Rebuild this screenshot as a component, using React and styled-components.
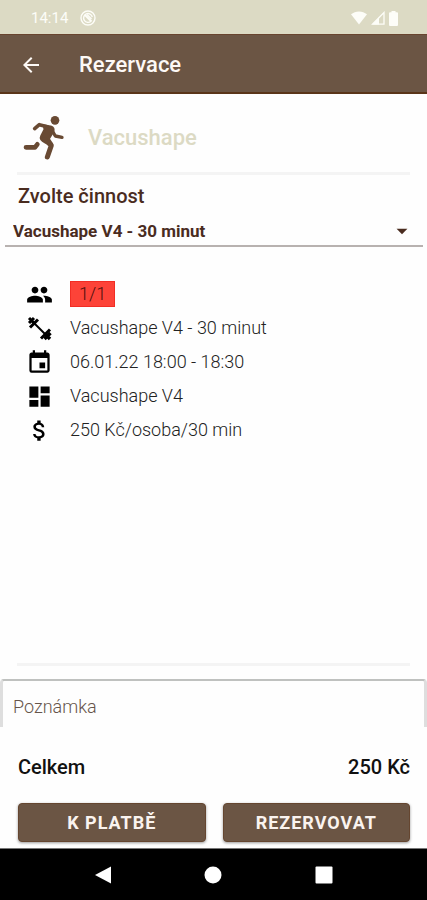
import React from "react";
import styled, { createGlobalStyle } from "styled-components";
import {
  MdArrowBack,
  MdArrowDropDown,
  MdPeople,
  MdEvent,
  MdDashboard,
  MdAttachMoney,
} from "react-icons/md";

const brown = "#6b5544";
const darkBrown = "#4a2c1f";
const sand = "#dcdac4";

const GlobalStyle = createGlobalStyle`
  *, *::before, *::after { box-sizing: border-box; }
  body {
    margin: 0;
    background: #fefefe;
    font-family: Roboto, "Liberation Sans", sans-serif;
  }
  button, input, select { font: inherit; }
`;

const Screen = styled.div`
  display: flex;
  flex-direction: column;
  min-height: 100vh;
  background: #fefefe;
`;

const StatusBar = styled.div`
  display: flex;
  align-items: center;
  justify-content: space-between;
  height: 34px;
  padding: 2px 29px 0 31px;
  background: ${sand};
  color: #fdfdf8;
`;

const StatusGroup = styled.div`
  display: flex;
  align-items: center;
  gap: ${(p) => p.$gap}px;
  font-size: 15px;
  line-height: 20px;
`;

const Toolbar = styled.header`
  display: flex;
  align-items: center;
  gap: 36px;
  height: 60px;
  padding: 2px 19px 0;
  background: ${brown};
  border-top: 1px solid #68442f;
  border-bottom: 2px solid #5a351a;
  color: #fdf9f6;
`;

const BackButton = styled.button`
  display: flex;
  padding: 0;
  border: 0;
  background: none;
  color: inherit;
  cursor: pointer;
`;

const Title = styled.h1`
  margin: 0;
  font-size: 22px;
  line-height: 28px;
  font-weight: 500;
`;

const Content = styled.main`
  display: flex;
  flex: 1;
  flex-direction: column;
`;

const ServiceHeader = styled.div`
  display: flex;
  align-items: center;
  gap: 20px;
  height: 78px;
  padding: 10px 22px 0;
  color: #694a33;
`;

const ServiceName = styled.h2`
  margin: 0;
  color: ${sand};
  font-size: 22px;
  line-height: 28px;
  font-weight: 500;
`;

const Divider = styled.hr`
  width: auto;
  height: 3px;
  margin: 0 17px;
  border: 0;
  background: #f4f4f4;
`;

const ActivityLabel = styled.label`
  padding: 9px 18px 0;
  color: ${darkBrown};
  font-size: 20px;
  line-height: 24px;
  font-weight: 500;
`;

const SelectBox = styled.div`
  position: relative;
  margin: 9px 4px 0 5px;
  border-bottom: 2px solid #b8b2b0;
  color: ${darkBrown};
`;

const Select = styled.select`
  display: block;
  width: 100%;
  height: 28px;
  padding: 0 40px 0 8px;
  border: 0;
  border-radius: 0;
  background: none;
  appearance: none;
  color: inherit;
  font-size: 17px;
  font-weight: 700;
`;

const SelectArrow = styled(MdArrowDropDown)`
  position: absolute;
  top: 1px;
  right: 8px;
  pointer-events: none;
`;

const Details = styled.ul`
  display: flex;
  flex: 1;
  flex-direction: column;
  margin: 0;
  padding: 30px 26px 0;
  list-style: none;
`;

const Detail = styled.li`
  display: flex;
  align-items: center;
  gap: 17px;
  height: 34px;
  color: #000;
`;

const DetailText = styled.span`
  color: #222;
  font-size: 18px;
  line-height: 26px;
  font-weight: 300;
`;

const Occupancy = styled(DetailText)`
  padding: 0 8px;
  border: 1px solid #f22d24;
  background: #fd4338;
  color: #4c100c;
  line-height: 24px;
`;

const NoteInput = styled.input`
  width: 100%;
  height: 48px;
  margin-top: 13px;
  padding: 4px 10px 0;
  border: 3px solid #dedede;
  border-top: 2px solid #bfc1bf;
  border-bottom: 0;
  border-radius: 4px 4px 0 0;
  background: #fefefe;
  color: ${darkBrown};
  font-size: 18px;
  font-weight: 300;
  &::placeholder { color: #66554b; opacity: 1; }
`;

const Total = styled.div`
  display: flex;
  justify-content: space-between;
  padding: 27px 17px 0 18px;
  color: #111;
  font-size: 20px;
  line-height: 26px;
  font-weight: 500;
`;

const Actions = styled.div`
  display: grid;
  grid-template-columns: 1fr 1fr;
  gap: 17px;
  padding: 23px 17px 6px 18px;
`;

const ActionButton = styled.button`
  height: 39px;
  padding: 0;
  border: 1px solid #654630;
  border-radius: 4px;
  background: ${brown};
  box-shadow: 0 1px 3px rgba(0, 0, 0, 0.4);
  color: #faf3ef;
  font-size: 18px;
  font-weight: 700;
  letter-spacing: 1px;
  cursor: pointer;
`;

const SystemNav = styled.nav`
  display: flex;
  align-items: center;
  justify-content: space-around;
  height: 52px;
  padding: 0 48px;
  border-top: 1px solid #777;
  background: #000;
`;

const NavButton = styled(BackButton)`
  color: #fff;
`;

function RunnerIcon() {
  return (
    <svg
      width="46"
      height="50"
      viewBox="0 0 138 150"
      fill="none"
      stroke="currentColor"
      strokeLinecap="round"
      strokeLinejoin="round"
      aria-hidden="true"
    >
      <circle cx="99" cy="22" r="13" fill="currentColor" stroke="none" />
      <path d="M38 47 52 35 76 41" strokeWidth="11" />
      <path d="M90 52 100 69 120 73" strokeWidth="10" />
      <path d="M66 38 86 41Q98 45 93 56L80 78 90 93 70 88Q52 80 58 69L68 50Z" fill="currentColor" strokeWidth="7" />
      <path d="M68 80 88 97 76 132" strokeWidth="15" />
      <path d="M12 103H39L46 94" strokeWidth="14" />
    </svg>
  );
}

function DumbbellIcon() {
  return (
    <svg width="27" height="27" viewBox="0 0 27 27" fill="none" stroke="#000" aria-hidden="true">
      <path d="M8 8 20 20" strokeWidth="2" />
      <path d="M4 12.500 12 4.500" strokeWidth="3" />
      <path d="M3 8 8 3M3 3 9 9" strokeWidth="3" />
      <path d="M15 23.500 24 14.500" strokeWidth="3" />
      <path d="M18.500 24 24.500 18M19 19 24 24" strokeWidth="3.400" />
    </svg>
  );
}

function BadgeIcon() {
  return (
    <svg width="16" height="16" viewBox="0 0 16 16" fill="none" stroke="currentColor" aria-hidden="true">
      <circle cx="8" cy="8" r="7" strokeWidth="1.400" />
      <path d="M11 11.200A4.400 4.400 0 1 1 12.300 7" strokeWidth="1.400" />
      <path d="m5 5 6.500 6.500" strokeWidth="2" />
      <path d="M7 4.500 11.500 9" strokeWidth="1.500" />
    </svg>
  );
}

function WifiIcon() {
  return (
    <svg width="16" height="14" viewBox="0 0 16 14" fill="currentColor" aria-hidden="true">
      <path d="M0 3.300C4.500-.6 11.500-.6 16 3.300L8 13.500Z" />
    </svg>
  );
}

function SignalIcon() {
  return (
    <svg width="14" height="14" viewBox="0 0 14 14" aria-hidden="true">
      <path d="M1.500 13.200H13V1.500Z" fill="none" stroke="currentColor" strokeWidth="1.300" />
      <path d="M1 13.500H8V6.500Z" fill="currentColor" />
    </svg>
  );
}

function BatteryIcon() {
  return (
    <svg width="9" height="15" viewBox="0 0 9 15" fill="currentColor" aria-hidden="true">
      <path d="M2.500 1.300V0h4v1.300H8a1 1 0 0 1 1 1V14a1 1 0 0 1-1 1H1a1 1 0 0 1-1-1V2.300a1 1 0 0 1 1-1Z" />
    </svg>
  );
}

function NavShape({ children }) {
  return (
    <svg width="18" height="18" viewBox="0 0 18 18" fill="currentColor" aria-hidden="true">
      {children}
    </svg>
  );
}

export default function App() {
  return (
    <Screen>
      <GlobalStyle />
      <StatusBar>
        <StatusGroup $gap={12}>
          <span>14:14</span>
          <BadgeIcon />
        </StatusGroup>
        <StatusGroup $gap={4}>
          <WifiIcon />
          <SignalIcon />
          <BatteryIcon />
        </StatusGroup>
      </StatusBar>

      <Toolbar>
        <BackButton type="button" aria-label="Zpět">
          <MdArrowBack size={24} />
        </BackButton>
        <Title>Rezervace</Title>
      </Toolbar>

      <Content>
        <ServiceHeader>
          <RunnerIcon />
          <ServiceName>Vacushape</ServiceName>
        </ServiceHeader>
        <Divider />

        <ActivityLabel htmlFor="activity">Zvolte činnost</ActivityLabel>
        <SelectBox>
          <Select id="activity" defaultValue="v4">
            <option value="v4">Vacushape V4 - 30 minut</option>
          </Select>
          <SelectArrow size={26} />
        </SelectBox>

        <Details>
          <Detail>
            <MdPeople size={27} />
            <Occupancy>1/1</Occupancy>
          </Detail>
          <Detail>
            <DumbbellIcon />
            <DetailText>Vacushape V4 - 30 minut</DetailText>
          </Detail>
          <Detail>
            <MdEvent size={27} />
            <DetailText>06.01.22 18:00 - 18:30</DetailText>
          </Detail>
          <Detail>
            <MdDashboard size={27} />
            <DetailText>Vacushape V4</DetailText>
          </Detail>
          <Detail>
            <MdAttachMoney size={27} />
            <DetailText>250 Kč/osoba/30 min</DetailText>
          </Detail>
        </Details>

        <Divider />
        <NoteInput type="text" placeholder="Poznámka" aria-label="Poznámka" />

        <Total>
          <span>Celkem</span>
          <span>250 Kč</span>
        </Total>
        <Actions>
          <ActionButton type="button">K PLATBĚ</ActionButton>
          <ActionButton type="button">REZERVOVAT</ActionButton>
        </Actions>
      </Content>

      <SystemNav>
        <NavButton type="button" aria-label="Zpět">
          <NavShape>
            <path d="M17 0.500v17L1 9Z" />
          </NavShape>
        </NavButton>
        <NavButton type="button" aria-label="Domů">
          <NavShape>
            <circle cx="9" cy="9" r="8.500" />
          </NavShape>
        </NavButton>
        <NavButton type="button" aria-label="Přehled">
          <NavShape>
            <rect x="0.500" y="0.500" width="17" height="17" rx="1" />
          </NavShape>
        </NavButton>
      </SystemNav>
    </Screen>
  );
}
